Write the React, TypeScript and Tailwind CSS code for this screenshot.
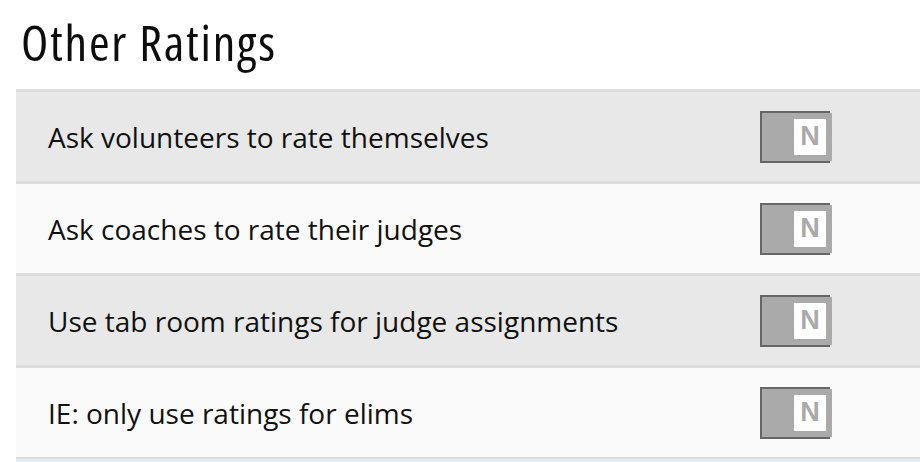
import React from 'react';

const ratings = [
  'Ask volunteers to rate themselves',
  'Ask coaches to rate their judges',
  'Use tab room ratings for judge assignments',
  'IE: only use ratings for elims',
];

const NoSwitch: React.FC = () => (
  <div className="relative h-[52px] w-[72px]">
    {/* dark outline sits 2px up/left of the grey fill */}
    <div className="absolute left-0 top-0 h-[52px] w-[70px] border-[2px] border-r-0 border-[#666666]" />
    <div className="absolute left-[2px] top-[2px] flex h-[48px] w-[70px] justify-end bg-[#aaaaaa] pr-[6px] pt-[6px]">
      <div className="flex h-[36px] w-[32px] justify-center bg-white pt-[4px] font-['Liberation_Sans',Arial,sans-serif] text-[27px] font-bold leading-none text-[#a9a9a9]">
        N
      </div>
    </div>
  </div>
);

export default function App() {
  return (
    <div className="min-h-[462px] bg-white pl-4">
      <h2 className="pl-[5px] pt-[6px] pb-[11px] font-['Open_Sans',sans-serif] text-[50px] font-medium font-stretch-condensed tracking-[1.8px] leading-[72px] text-[#0d0d0d]">
        Other Ratings
      </h2>

      <div className="border-b-[2px] border-[#dcdcdc]">
        {ratings.map((label, i) => (
          <div
            key={label}
            className={`flex h-[92px] items-center justify-between border-t-[3px] border-[#dcdcdc] pl-8 pr-[88px] ${
              i % 2 === 0 ? 'bg-[#e8e8e8]' : 'bg-[#fafafa]'
            }`}
          >
            <span className="font-['Open_Sans',sans-serif] text-[28px] text-[#111111]">{label}</span>
            <NoSwitch />
          </div>
        ))}
      </div>
      <div className="h-[8px] bg-[#e2ecf5]" />
    </div>
  );
}
